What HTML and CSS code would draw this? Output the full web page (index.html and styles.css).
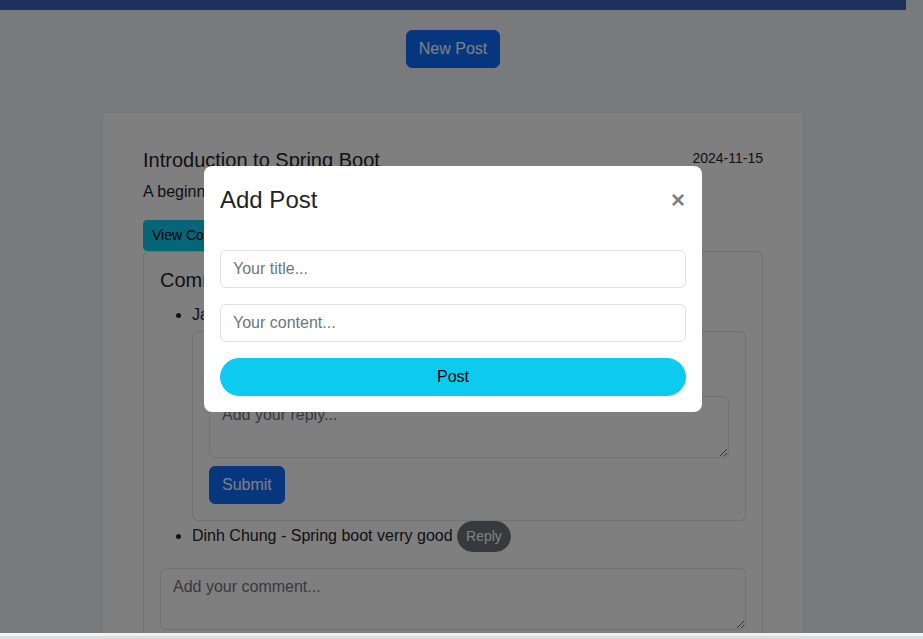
FILE: index.html
```html
<!DOCTYPE html>
<html lang="en">
<head>
<meta charset="utf-8">
<title>Posts</title>
<link rel="stylesheet" href="styles.css">
</head>
<body>
<header class="topbar"></header>
<main class="page">
  <div class="actions">
    <button class="btn btn-primary">New Post</button>
  </div>
  <article class="post-card">
    <div class="post-head">
      <h5 class="post-title">Introduction to Spring Boot</h5>
      <span class="post-date">2024-11-15</span>
    </div>
    <p class="post-desc">A beginner's guide to Spring Boot.</p>
    <button class="btn btn-info btn-sm">View Comments</button>
    <div class="comments">
      <h5 class="comments-title">Comments</h5>
      <ul class="comment-list">
        <li>Jack Nguyen - Very helpful <button class="btn btn-secondary btn-sm pill">Reply</button>
          <div class="reply-box">
            <ul class="reply-list">
              <li>Admin - Thank you!</li>
              <li>Minh Tran - Agreed</li>
            </ul>
            <textarea class="form-control area" placeholder="Add your reply..."></textarea>
            <button class="btn btn-primary submit">Submit</button>
          </div>
        </li>
        <li>Dinh Chung - Spring boot verry good <button class="btn btn-secondary btn-sm pill">Reply</button></li>
      </ul>
      <textarea class="form-control area" placeholder="Add your comment..."></textarea>
    </div>
  </article>
</main>

<div class="backdrop"></div>
<div class="modal-wrap">
  <div class="modal">
    <div class="modal-header">
      <h4 class="modal-title">Add Post</h4>
      <button class="close" aria-label="Close">&times;</button>
    </div>
    <div class="modal-body">
      <input class="form-control field" type="text" placeholder="Your title...">
      <input class="form-control field" type="text" placeholder="Your content...">
      <button class="btn btn-post">Post</button>
    </div>
  </div>
</div>
<div class="hscroll"></div>
</body>
</html>
```

FILE: styles.css
```css
* { box-sizing: border-box; }

html, body {
  margin: 0;
  height: 100%;
  overflow: hidden;
}

body {
  font-family: "Liberation Sans", Arial, sans-serif;
  font-size: 16px;
  line-height: 1.5;
  color: #212529;
  background: #f3f4f6;
  padding-right: 17px;
}

.topbar {
  height: 10px;
  background: #3e62b2;
}

.page {
  padding-top: 20px;
}

.actions {
  display: flex;
  justify-content: center;
}

.btn {
  font-family: inherit;
  font-size: 16px;
  line-height: 24px;
  padding: 6px 12px;
  border: 1px solid transparent;
  border-radius: 6px;
  cursor: pointer;
}

.btn-sm {
  font-size: 14px;
  line-height: 21px;
  padding: 4px 8px;
  border-radius: 4px;
}

.btn-primary {
  background: #0d6efd;
  border-color: #0d6efd;
  color: #fff;
}

.btn-info {
  background: #0dcaf0;
  border-color: #0dcaf0;
  color: #000;
}

.btn-secondary {
  background: #6c757d;
  border-color: #6c757d;
  color: #fff;
}

.pill { border-radius: 50rem; }

.post-card {
  width: 702px;
  margin: 44px auto 0;
  background: #fff;
  border: 1px solid #ececec;
  padding: 35px 40px 40px;
}

.post-head {
  display: flex;
  justify-content: space-between;
  align-items: flex-start;
}

.post-title {
  margin: 0 0 8px;
  font-size: 20px;
  font-weight: 400;
  line-height: 1.2;
}

.post-date {
  font-size: 14px;
  line-height: 21px;
}

.post-desc {
  margin: 0 0 16px;
}

.comments {
  border: 1px solid #dee2e6;
  border-radius: 6px;
  padding: 16px;
}

.comments-title {
  margin: 0 0 8px;
  font-size: 20px;
  font-weight: 400;
  line-height: 1.2;
}

.comment-list {
  margin: 0 0 16px;
  padding-left: 32px;
}

.reply-box {
  border: 1px solid #dee2e6;
  border-radius: 6px;
  padding: 16px;
}

.reply-list {
  margin: 0;
  padding-left: 32px;
}

.form-control {
  display: block;
  width: 100%;
  font-family: inherit;
  font-size: 16px;
  line-height: 24px;
  color: #212529;
  background: #fff;
  border: 1px solid #dee2e6;
  border-radius: 6px;
  padding: 6px 12px;
}

.form-control::placeholder { color: #6c757d; opacity: 1; }

.area {
  height: 62px;
  resize: vertical;
}

.submit {
  margin-top: 8px;
}

.backdrop {
  position: fixed;
  inset: 0;
  background: rgba(0, 0, 0, 0.5);
}

.modal-wrap {
  position: fixed;
  inset: 0;
  display: flex;
  justify-content: center;
  align-items: flex-start;
  padding: 166px 17px 0 0;
}

.modal {
  width: 498px;
  background: #fff;
  border-radius: 8px;
}

.modal-header {
  display: flex;
  justify-content: space-between;
  align-items: center;
  padding: 16px;
}

.modal-title {
  margin: 0;
  font-size: 24px;
  font-weight: 400;
  line-height: 36px;
}

.close {
  background: none;
  border: 0;
  padding: 0 1px 0 0;
  font-family: inherit;
  font-size: 24px;
  font-weight: 700;
  line-height: 1;
  color: #000;
  opacity: 0.5;
  cursor: pointer;
}

.modal-body {
  display: flex;
  flex-direction: column;
  gap: 16px;
  padding: 16px;
}

.field {
  height: 38px;
}

.btn-post {
  background: #0dcaf0;
  border-color: #0dcaf0;
  color: #000;
  border-radius: 50rem;
  width: 100%;
}

.hscroll {
  position: fixed;
  left: 0;
  right: 0;
  bottom: 0;
  height: 6px;
  background: #f1f1f1;
  border-bottom: 3px solid #dcdcdc;
}
```
